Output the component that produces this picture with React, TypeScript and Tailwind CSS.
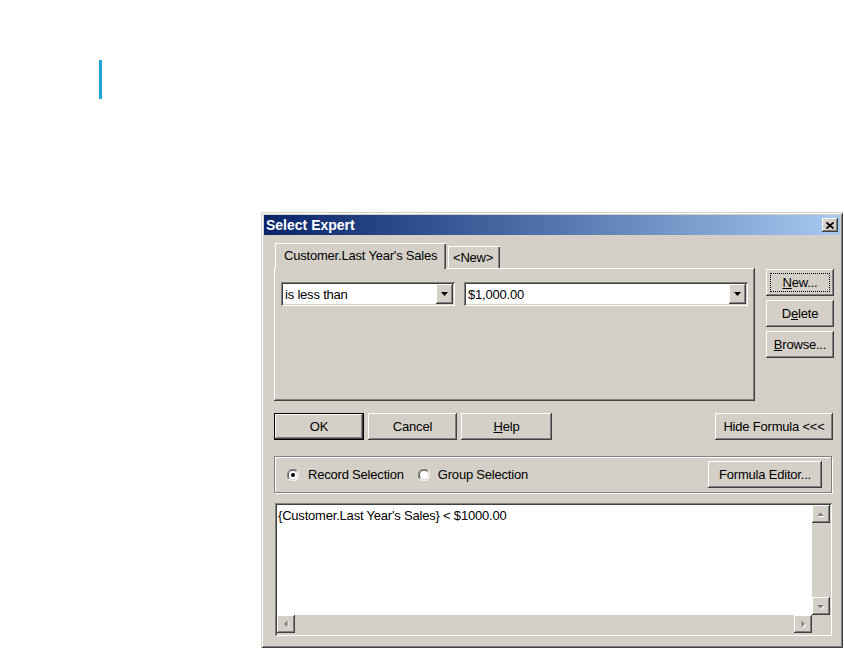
import React from "react";

const raised =
  "bg-[#d4d0c8] shadow-[inset_-1px_-1px_#404040,inset_1px_1px_#ffffff,inset_-2px_-2px_#808080,inset_2px_2px_#d4d0c8]";
const sunken =
  "shadow-[inset_1px_1px_#808080,inset_-1px_-1px_#ffffff,inset_2px_2px_#404040,inset_-2px_-2px_#d4d0c8]";

function Btn({
  w,
  children,
  isDefault,
  focus,
}: {
  w: string;
  children: React.ReactNode;
  isDefault?: boolean;
  focus?: boolean;
}) {
  if (isDefault) {
    return (
      <div className={`${w} h-[27px] border border-black flex`}>
        <div className={`flex-1 ${raised} flex items-center justify-center`}>{children}</div>
      </div>
    );
  }
  return (
    <div className={`${w} h-[27px] ${raised} flex items-center justify-center p-[4px]`}>
      <div
        className={`w-full h-full flex items-center justify-center ${
          focus ? "outline-1 outline-dotted outline-black -outline-offset-1" : ""
        }`}
      >
        {children}
      </div>
    </div>
  );
}

function DownArrow() {
  return (
    <svg width="7" height="4" viewBox="0 0 7 4">
      <path d="M0 0h7L3.5 4z" fill="#000" />
    </svg>
  );
}

function Combo({ w, text }: { w: string; text: string }) {
  return (
    <div className={`${w} h-[24px] bg-white ${sunken} flex items-stretch p-[2px]`}>
      <div className="flex-1 flex items-center pl-[2px]">{text}</div>
      <div className={`w-[17px] ${raised} flex items-center justify-center`}>
        <DownArrow />
      </div>
    </div>
  );
}

function Radio({ checked }: { checked?: boolean }) {
  return (
    <svg width="12" height="12" viewBox="0 0 12 12">
      <circle cx="6" cy="6" r="5.5" fill="#fff" />
      <path d="M1.8 10.2 A5.6 5.6 0 0 1 10.2 1.8" stroke="#808080" strokeWidth="1" fill="none" />
      <path d="M2.6 9.4 A4.6 4.6 0 0 1 9.4 2.6" stroke="#404040" strokeWidth="1" fill="none" />
      <path d="M10.2 1.8 A5.6 5.6 0 0 1 1.8 10.2" stroke="#ffffff" strokeWidth="1" fill="none" />
      <path d="M9.4 2.6 A4.6 4.6 0 0 1 2.6 9.4" stroke="#d4d0c8" strokeWidth="1" fill="none" />
      {checked && <circle cx="6" cy="6" r="2" fill="#000" />}
    </svg>
  );
}

function ScrollBtn({ dir }: { dir: "up" | "down" | "left" | "right" }) {
  const paths: Record<string, string> = {
    up: "M5 11h7L8.5 7.5z",
    down: "M5 8h7L8.5 11.5z",
    left: "M10.5 5.5v7L7 9z",
    right: "M7.5 5.5v7L11 9z",
  };
  return (
    <div className={`w-[18px] h-[18px] ${raised} flex items-center justify-center`}>
      <svg width="18" height="18" viewBox="0 0 18 18">
        <path d={paths[dir]} fill="#ffffff" transform="translate(1 1)" />
        <path d={paths[dir]} fill="#808080" />
      </svg>
    </div>
  );
}

export default function App() {
  return (
    <div className="w-[844px] h-[650px] bg-white overflow-hidden font-['Liberation_Sans',Arial,sans-serif] text-[13px] tracking-[-0.2px] text-black leading-none">
      <div className="ml-[99px] pt-[60px]">
        <div className="w-[3px] h-[39px] bg-[#22a4df]" />
      </div>

      <div className="ml-[261px] mt-[113px] w-[582px] h-[436px] bg-[#d4d0c8] p-[3px] flex flex-col shadow-[inset_1px_1px_#d4d0c8,inset_-1px_-1px_#404040,inset_2px_2px_#ffffff,inset_-2px_-2px_#808080]">
        {/* Title bar */}
        <div className="h-[20px] flex items-center justify-between bg-gradient-to-r from-[#0a246a] to-[#a6caf0] pl-[2px] pr-[2px]">
          <span className="text-white font-bold text-[14px] tracking-normal">Select Expert</span>
          <div className={`w-[16px] h-[14px] ${raised} flex items-center justify-center`}>
            <svg width="8" height="7" viewBox="0 0 8 7">
              <path d="M0.5 0.5L7.5 6.5M7.5 0.5L0.5 6.5" stroke="#000" strokeWidth="1.8" />
            </svg>
          </div>
        </div>

        {/* Body */}
        <div className="pl-[10px] pt-[8px] flex flex-col">
          {/* Row 1 */}
          <div className="flex h-[158px]">
            <div className="w-[481px] flex flex-col">
              <div className="h-[25px] flex items-end">
                <div className="relative z-10 ml-[1px] -mb-[1px] w-[171px] h-[26px] bg-[#d4d0c8] shadow-[inset_1px_1px_#ffffff,inset_-1px_0_#404040,inset_-2px_0_#808080] flex items-center pl-[9px] pb-[2px]">
                  Customer.Last Year's Sales
                </div>
                <div className="ml-[2px] w-[52px] h-[22px] shadow-[inset_1px_1px_#ffffff,inset_-1px_0_#404040,inset_-2px_0_#808080] flex items-center pl-[5px] pt-[1px]">
                  &lt;New&gt;
                </div>
              </div>
              <div className={`h-[133px] ${raised} pl-[7px] pt-[14px] flex gap-[9px] items-start`}>
                <Combo w="w-[174px]" text="is less than" />
                <Combo w="w-[284px]" text="$1,000.00" />
              </div>
            </div>
            <div className="ml-[11px] w-[68px] pt-[26px] flex flex-col gap-[4px]">
              <Btn w="w-[68px]" focus>
                <span>
                  <span className="underline">N</span>ew...
                </span>
              </Btn>
              <Btn w="w-[68px]">
                <span>
                  D<span className="underline">e</span>lete
                </span>
              </Btn>
              <Btn w="w-[68px]">
                <span>
                  <span className="underline">B</span>rowse...
                </span>
              </Btn>
            </div>
          </div>

          {/* Row 2 */}
          <div className="mt-[12px] w-[559px] h-[27px] flex">
            <Btn w="w-[90px]" isDefault>
              OK
            </Btn>
            <div className="ml-[4px]">
              <Btn w="w-[89px]">Cancel</Btn>
            </div>
            <div className="ml-[4px]">
              <Btn w="w-[91px]">
                <span>
                  <span className="underline">H</span>elp
                </span>
              </Btn>
            </div>
            <div className="ml-auto">
              <Btn w="w-[118px]">Hide Formula &lt;&lt;&lt;</Btn>
            </div>
          </div>

          {/* Row 3 */}
          <div className="mt-[16px] w-[558px] h-[37px] border border-[#808080] shadow-[inset_1px_1px_#ffffff,1px_1px_#ffffff] flex items-center pl-[12px]">
            <Radio checked />
            <span className="ml-[9px]">Record Selection</span>
            <span className="ml-[14px]">
              <Radio />
            </span>
            <span className="ml-[8px]">Group Selection</span>
            <div className="ml-auto mr-[9px]">
              <Btn w="w-[114px]">Formula Editor...</Btn>
            </div>
          </div>

          {/* Row 4 */}
          <div className={`mt-[10px] ml-[1px] w-[557px] h-[133px] bg-white ${sunken} p-[2px]`}>
            <div className="w-full h-full grid grid-cols-[1fr_18px] grid-rows-[1fr_19px]">
              <div className="pl-[1px] pt-[4px]">{"{Customer.Last Year's Sales} < $1000.00"}</div>
              <div className="bg-[#d4d0c8] flex flex-col justify-between">
                <ScrollBtn dir="up" />
                <ScrollBtn dir="down" />
              </div>
              <div className="bg-[#d4d0c8] flex justify-between items-start">
                <ScrollBtn dir="left" />
                <ScrollBtn dir="right" />
              </div>
              <div className="bg-[#d4d0c8]" />
            </div>
          </div>
        </div>
      </div>
    </div>
  );
}
